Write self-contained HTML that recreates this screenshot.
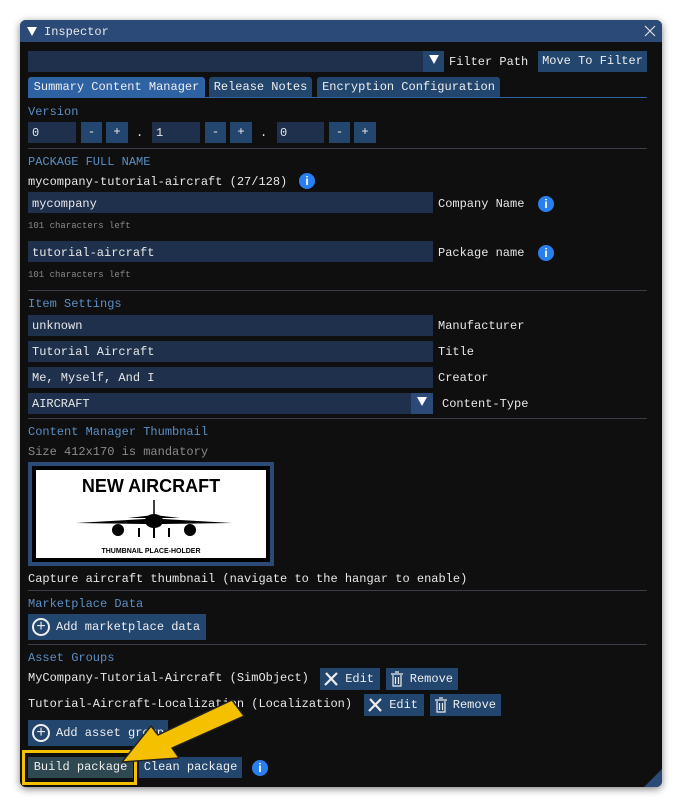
<!DOCTYPE html>
<html><head><meta charset="utf-8"><style>
*{margin:0;padding:0;box-sizing:border-box}
body{width:682px;height:807px;background:#fff;position:relative;overflow:hidden;font-family:"Liberation Mono",monospace;font-size:12px;color:#e8e8e8}
.win{position:absolute;left:20px;top:20px;width:642px;height:767px;background:#0f0f10;border-radius:6px;box-shadow:0 2px 8px rgba(0,0,0,.5);overflow:hidden}
.tb{position:absolute;left:0;top:0;width:642px;height:22px;background:#2c4a77}
.a{position:absolute;white-space:nowrap;line-height:14px}
.in{position:absolute;background:#1e304b;height:21px}
.bt{position:absolute;background:#23466f;height:21px;text-align:center;line-height:21px;color:#eee;white-space:nowrap}
.h{color:#5b8fc4}
.sep{position:absolute;left:8px;width:619px;height:1px;background:#3a3e48}
.sm{font-size:9px;color:#8a8a8a}
.info{position:absolute;width:16px;height:16px;border-radius:50%;background:#2a7ff0;color:#fff;font-family:"Liberation Sans",sans-serif;font-weight:bold;font-size:12px;text-align:center;line-height:16px}
.tri{display:inline-block;width:0;height:0;border-left:5px solid transparent;border-right:5px solid transparent;border-top:9px solid #fff}
</style></head><body>
<div class="win">
<div class="tb"></div>
<div class="a" style="left:7px;top:6px"><span class="tri"></span></div>
<div class="a" style="left:24px;top:5px">Inspector</div>
<svg style="position:absolute;left:624px;top:5px" width="12" height="12"><path d="M1 1L11 11M11 1L1 11" stroke="#ddd" stroke-width="1.2"/></svg>

<div class="in" style="left:8px;top:31px;width:395px"></div>
<div class="bt" style="left:403px;top:31px;width:21px"><span class="tri"></span></div>
<div class="a" style="left:429px;top:35px">Filter Path</div>
<div class="bt" style="left:518px;top:31px;width:109px">Move To Filter</div>

<div class="bt" style="left:8px;top:57px;width:177px;height:20px;line-height:21px;background:#2f62a3;border-radius:3px 3px 0 0">Summary Content Manager</div>
<div class="bt" style="left:189px;top:57px;width:103px;height:20px;line-height:21px;border-radius:3px 3px 0 0">Release Notes</div>
<div class="bt" style="left:297px;top:57px;width:183px;height:20px;line-height:21px;border-radius:3px 3px 0 0">Encryption Configuration</div>
<div style="position:absolute;left:8px;top:77px;width:619px;height:1px;background:#2f62a3"></div>

<div class="a h" style="left:8px;top:85px">Version</div>
<div class="in" style="left:8px;top:102px;width:48px"></div><div class="a" style="left:12px;top:106px">0</div>
<div class="bt" style="left:61px;top:102px;width:21px">-</div><div class="bt" style="left:86px;top:102px;width:22px">+</div>
<div class="a" style="left:116px;top:106px">.</div>
<div class="in" style="left:132px;top:102px;width:48px"></div><div class="a" style="left:136px;top:106px">1</div>
<div class="bt" style="left:185px;top:102px;width:21px">-</div><div class="bt" style="left:210px;top:102px;width:22px">+</div>
<div class="a" style="left:240px;top:106px">.</div>
<div class="in" style="left:257px;top:102px;width:47px"></div><div class="a" style="left:260px;top:106px">0</div>
<div class="bt" style="left:309px;top:102px;width:21px">-</div><div class="bt" style="left:334px;top:102px;width:22px">+</div>
<div class="sep" style="top:128px"></div>

<div class="a h" style="left:8px;top:135px">PACKAGE FULL NAME</div>
<div class="a" style="left:8px;top:155px">mycompany-tutorial-aircraft (27/128)</div>
<div class="info" style="left:279px;top:153px">i</div>
<div class="in" style="left:8px;top:172px;width:405px"></div><div class="a" style="left:12px;top:177px">mycompany</div>
<div class="a" style="left:418px;top:177px">Company Name</div><div class="info" style="left:518px;top:176px">i</div>
<div class="a sm" style="left:8px;top:199px">101 characters left</div>
<div class="in" style="left:8px;top:221px;width:405px"></div><div class="a" style="left:12px;top:226px">tutorial-aircraft</div>
<div class="a" style="left:418px;top:226px">Package name</div><div class="info" style="left:518px;top:225px">i</div>
<div class="a sm" style="left:8px;top:248px">101 characters left</div>
<div class="sep" style="top:270px"></div>

<div class="a h" style="left:8px;top:277px">Item Settings</div>
<div class="in" style="left:8px;top:295px;width:405px"></div><div class="a" style="left:12px;top:299px">unknown</div><div class="a" style="left:418px;top:299px">Manufacturer</div>
<div class="in" style="left:8px;top:321px;width:405px"></div><div class="a" style="left:12px;top:325px">Tutorial Aircraft</div><div class="a" style="left:418px;top:325px">Title</div>
<div class="in" style="left:8px;top:347px;width:405px"></div><div class="a" style="left:12px;top:351px">Me, Myself, And I</div><div class="a" style="left:418px;top:351px">Creator</div>
<div class="in" style="left:8px;top:373px;width:405px"></div><div class="a" style="left:12px;top:377px">AIRCRAFT</div>
<div class="bt" style="left:391px;top:373px;width:22px;background:#2c4a77"><span class="tri"></span></div>
<div class="a" style="left:422px;top:377px">Content-Type</div>
<div class="sep" style="top:398px"></div>

<div class="a h" style="left:8px;top:405px">Content Manager Thumbnail</div>
<div class="a" style="left:8px;top:425px;color:#8a8a8a">Size 412x170 is mandatory</div>
<div style="position:absolute;left:8px;top:442px;width:246px;height:104px;border:4px solid #2c4a77;background:#000">
 <div style="position:absolute;left:4px;top:4px;width:230px;height:88px;background:#fff;color:#000;font-family:'Liberation Sans',sans-serif;text-align:center">
  <div style="font-weight:bold;font-size:18px;margin-top:6px">NEW AIRCRAFT</div>
  <svg width="160" height="46" viewBox="0 0 160 46" style="position:absolute;left:38px;top:28px">
   <path d="M80 2 L80 20" stroke="#000" stroke-width="1.5"/>
   <ellipse cx="80" cy="23" rx="9" ry="7" fill="#000"/>
   <path d="M2 25 L71 21 L89 21 L158 25 L89 26 L71 26Z" fill="#000"/>
   <path d="M54 20 L80 17 L106 20Z" fill="#000"/>
   <circle cx="44" cy="32" r="6" fill="#000"/><circle cx="116" cy="32" r="6" fill="#000"/>
   <path d="M65 30v9M80 30v10M95 30v9" stroke="#000" stroke-width="2"/>
  </svg>
  <div style="position:absolute;left:0;right:0;top:78px;font-size:7px;font-weight:bold">THUMBNAIL PLACE-HOLDER</div>
 </div>
</div>
<div class="a" style="left:8px;top:552px">Capture aircraft thumbnail (navigate to the hangar to enable)</div>
<div class="sep" style="top:570px"></div>

<div class="a h" style="left:8px;top:577px">Marketplace Data</div>
<div class="bt" style="left:8px;top:594px;width:178px;height:26px;line-height:26px;text-align:left;padding-left:28px">Add marketplace data</div>
<div style="position:absolute;left:12px;top:598px;width:18px;height:18px;border:2px solid #eee;border-radius:50%;text-align:center;line-height:14px;font-size:16px">+</div>
<div class="sep" style="top:624px"></div>

<div class="a h" style="left:8px;top:631px">Asset Groups</div>
<div class="a" style="left:8px;top:651px">MyCompany-Tutorial-Aircraft (SimObject)</div>
<div class="bt" style="left:300px;top:648px;width:60px;height:22px;line-height:22px;text-align:right;padding-right:6px">Edit</div>
<svg style="position:absolute;left:303px;top:651px" width="16" height="16"><path d="M2 14L14 2M3 2l11 12" stroke="#eee" stroke-width="2.2"/></svg>
<div class="bt" style="left:366px;top:648px;width:72px;height:22px;line-height:22px;text-align:right;padding-right:5px">Remove</div>
<svg style="position:absolute;left:370px;top:651px" width="14" height="16"><path d="M1 3h12M5 1h4M3 4v11h8V4M5.5 6v7M8.5 6v7" stroke="#eee" stroke-width="1.2" fill="none"/></svg>
<div class="a" style="left:8px;top:677px">Tutorial-Aircraft-Localization (Localization)</div>
<div class="bt" style="left:344px;top:674px;width:60px;height:22px;line-height:22px;text-align:right;padding-right:6px">Edit</div>
<svg style="position:absolute;left:347px;top:677px" width="16" height="16"><path d="M2 14L14 2M3 2l11 12" stroke="#eee" stroke-width="2.2"/></svg>
<div class="bt" style="left:410px;top:674px;width:71px;height:22px;line-height:22px;text-align:right;padding-right:5px">Remove</div>
<svg style="position:absolute;left:414px;top:677px" width="14" height="16"><path d="M1 3h12M5 1h4M3 4v11h8V4M5.5 6v7M8.5 6v7" stroke="#eee" stroke-width="1.2" fill="none"/></svg>

<div class="bt" style="left:8px;top:700px;width:140px;height:26px;line-height:26px;text-align:left;padding-left:28px">Add asset group</div>
<div style="position:absolute;left:12px;top:704px;width:18px;height:18px;border:2px solid #eee;border-radius:50%;text-align:center;line-height:14px;font-size:16px">+</div>

<div style="position:absolute;left:2px;top:730px;width:115px;height:35px;border:3px solid #f5c000"></div>
<div class="bt" style="left:8px;top:737px;width:105px;background:#2f4852">Build package</div>
<div class="bt" style="left:119px;top:737px;width:103px">Clean package</div>
<div class="info" style="left:232px;top:740px">i</div>
<div style="position:absolute;right:0;bottom:0;width:0;height:0;border-left:18px solid transparent;border-bottom:18px solid #2c4a77"></div>
</div>
<svg width="682" height="807" style="position:absolute;left:0;top:0">
<path d="M232 700 L244 716 L172 748 L179 758 L122 762 L151 726 L158 735Z" fill="#f5c000" stroke="#222" stroke-width="1.5" stroke-linejoin="round"/>
</svg>
</body></html>
